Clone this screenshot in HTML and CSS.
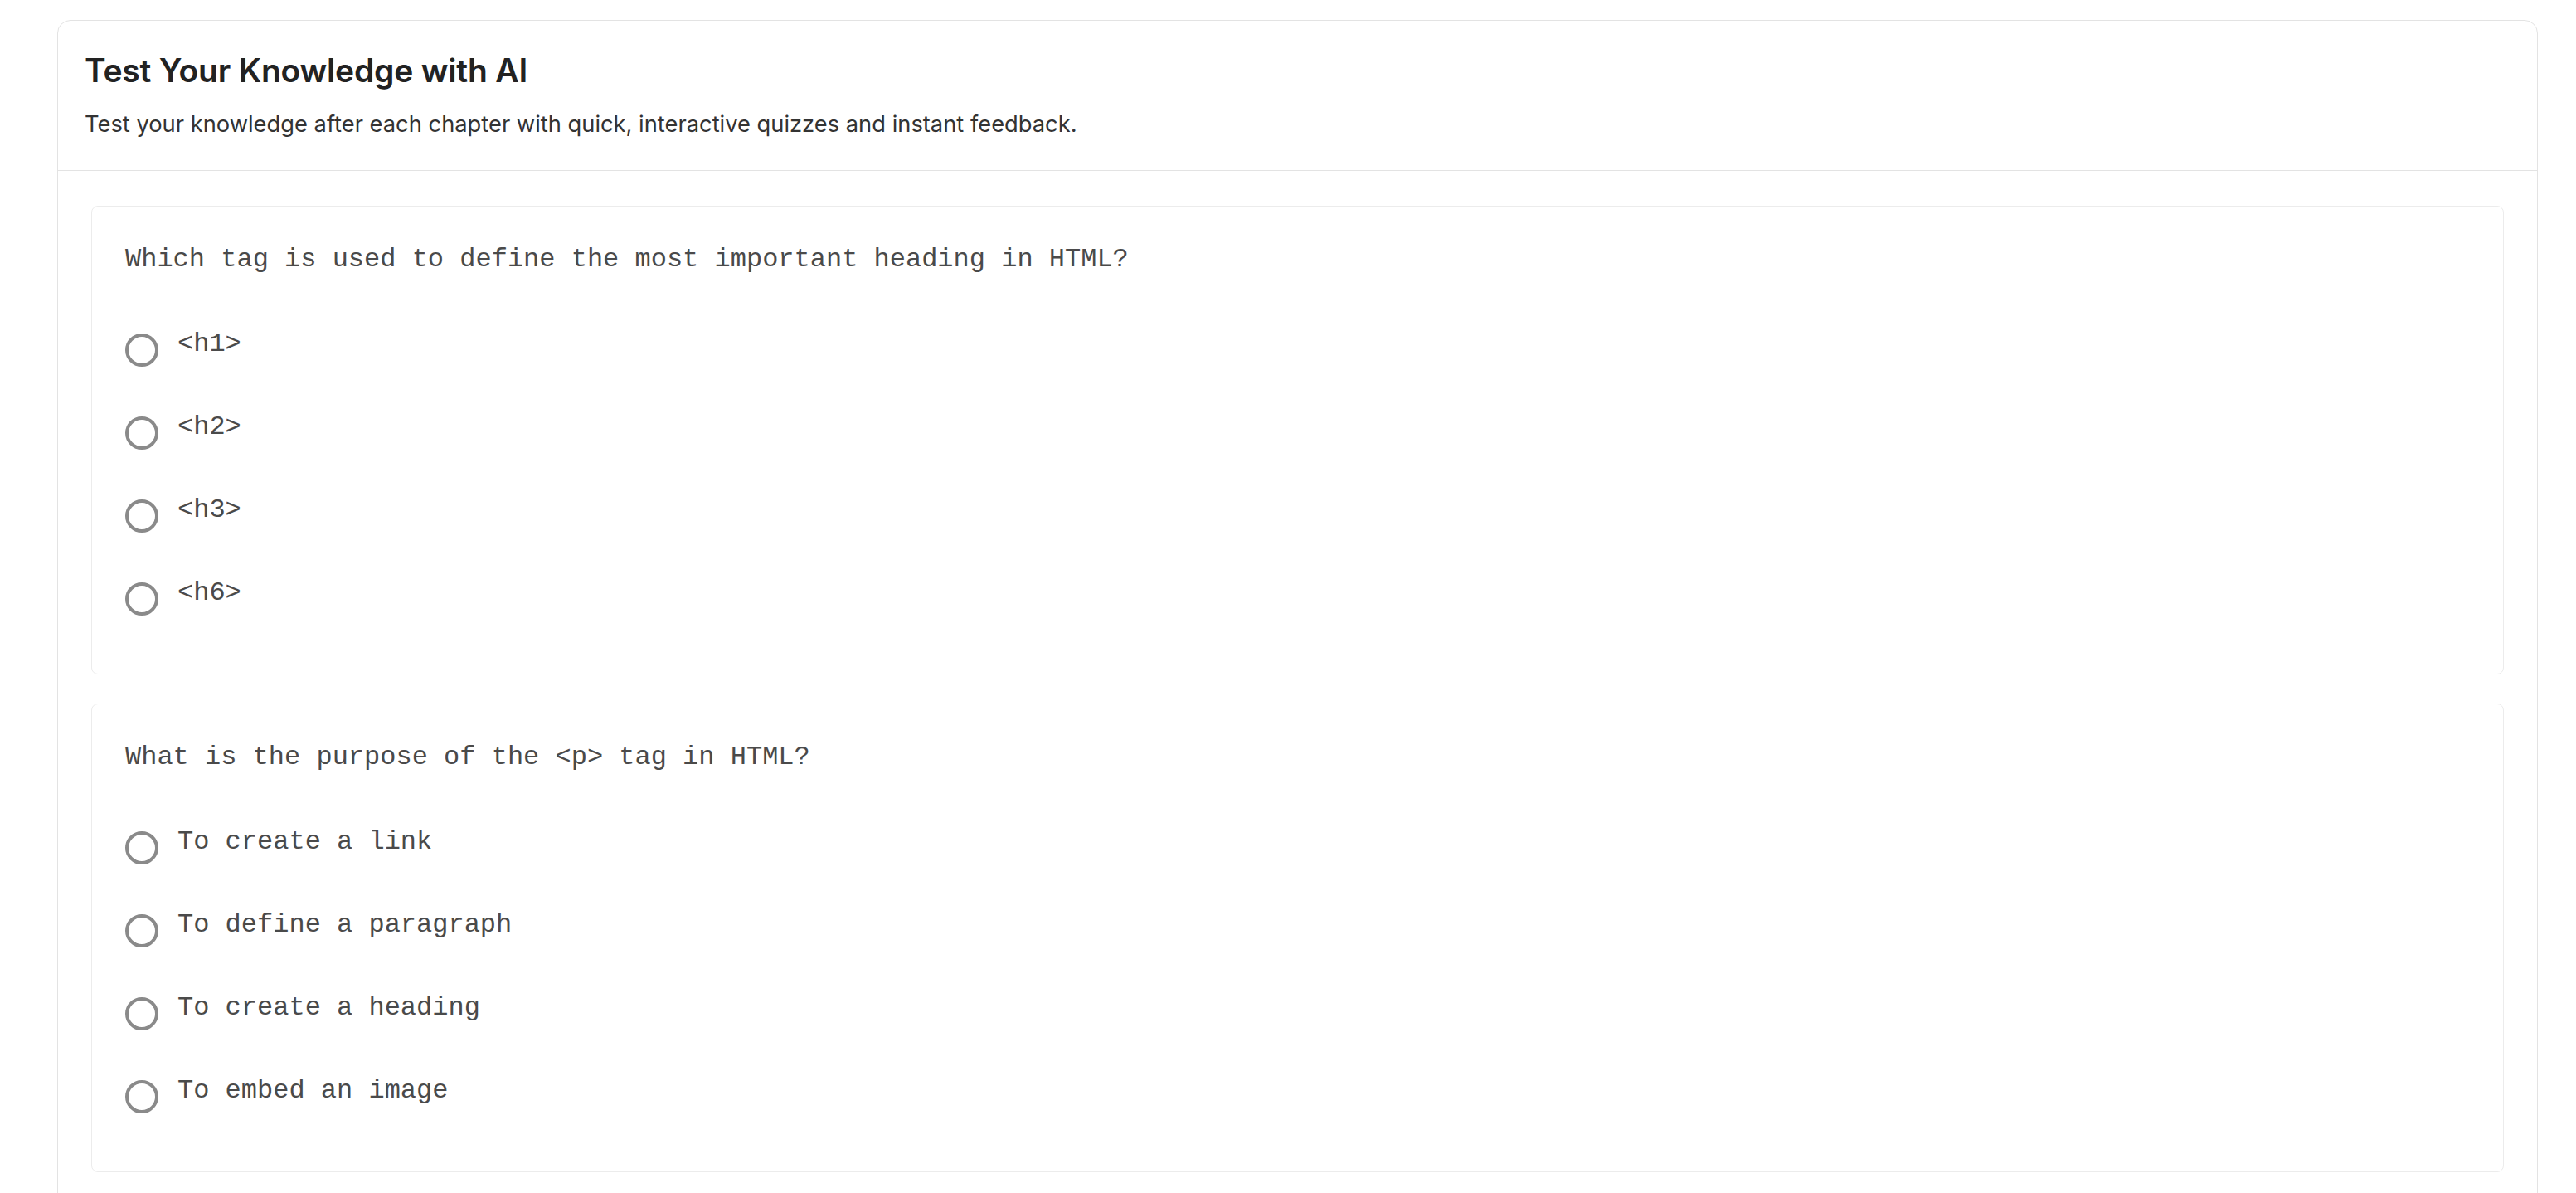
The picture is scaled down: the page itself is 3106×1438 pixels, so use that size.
FILE: index.html
```html
<!doctype html>
<html lang="en">
  <head>
    <meta charset="UTF-8" />
    <meta name="viewport" content="width=device-width, initial-scale=1.0" />
    <title>Quiz</title>
    <link rel="stylesheet" href="styles.css">
  </head>

  <body>
    <div class="page">
      <section class="quiz-card">
        <header class="quiz-head">
          <h2 class="quiz-title">Test Your Knowledge with AI</h2>
          <p class="quiz-sub">Test your knowledge after each chapter with quick, interactive quizzes and instant feedback.</p>
        </header>

        <div class="quiz-body">
          <div class="question">
            <p class="question-text">Which tag is used to define the most important heading in HTML?</p>
            <div class="options">
              <label class="option"><input type="radio" name="q1" /><span>&lt;h1&gt;</span></label>
              <label class="option"><input type="radio" name="q1" /><span>&lt;h2&gt;</span></label>
              <label class="option"><input type="radio" name="q1" /><span>&lt;h3&gt;</span></label>
              <label class="option"><input type="radio" name="q1" /><span>&lt;h6&gt;</span></label>
            </div>
          </div>

          <div class="question">
            <p class="question-text">What is the purpose of the &lt;p&gt; tag in HTML?</p>
            <div class="options">
              <label class="option"><input type="radio" name="q2" /><span>To create a link</span></label>
              <label class="option"><input type="radio" name="q2" /><span>To define a paragraph</span></label>
              <label class="option"><input type="radio" name="q2" /><span>To create a heading</span></label>
              <label class="option"><input type="radio" name="q2" /><span>To embed an image</span></label>
            </div>
          </div>
        </div>
      </section>
    </div>
  </body>
</html>
```

FILE: styles.css
```css
* {
  box-sizing: border-box;
}

body {
  margin: 0;
  background-color: #ffffff;
  font-family: "Inter", "Noto Sans", "Liberation Sans", sans-serif;
  overflow: hidden;
}

.page {
  padding: 24px 46px 0 69px;
}

/* outer card: header + list of questions */
.quiz-card {
  border: 1px solid #e3e3e3;
  border-radius: 16px;
  background-color: #ffffff;
}

.quiz-head {
  padding: 36px 32px 34px;
  border-bottom: 1px solid #e3e3e3;
}

.quiz-title {
  margin: 0;
  font-size: 39px;
  line-height: 48px;
  font-weight: 600;
  letter-spacing: -0.2px;
  color: #222222;
}

.quiz-sub {
  margin: 20px 0 0;
  font-size: 27.3px;
  line-height: 42px;
  color: #333333;
}

.quiz-body {
  display: flex;
  flex-direction: column;
  gap: 35px;
  padding: 42px 40px 40px;
}

/* one question block */
.question {
  border: 1px solid #ececec;
  border-radius: 8px;
  padding: 40px;
}

.question-text,
.option {
  font-family: "Courier New", "Liberation Mono", monospace;
  font-size: 32px;
  line-height: 48px;
  color: #4a4a4a;
}

.question-text {
  margin: 0 0 54px;
}

.options {
  display: flex;
  flex-direction: column;
  gap: 49px;
  padding-bottom: 30px;
}

.option {
  display: flex;
  align-items: flex-start;
  gap: 23px;
  cursor: pointer;
}

.option input {
  appearance: none;
  flex: none;
  width: 40px;
  height: 40px;
  margin: 11px 0 0;
  border: 4px solid #8a8a8a;
  border-radius: 50%;
  background-color: #ffffff;
}
```
